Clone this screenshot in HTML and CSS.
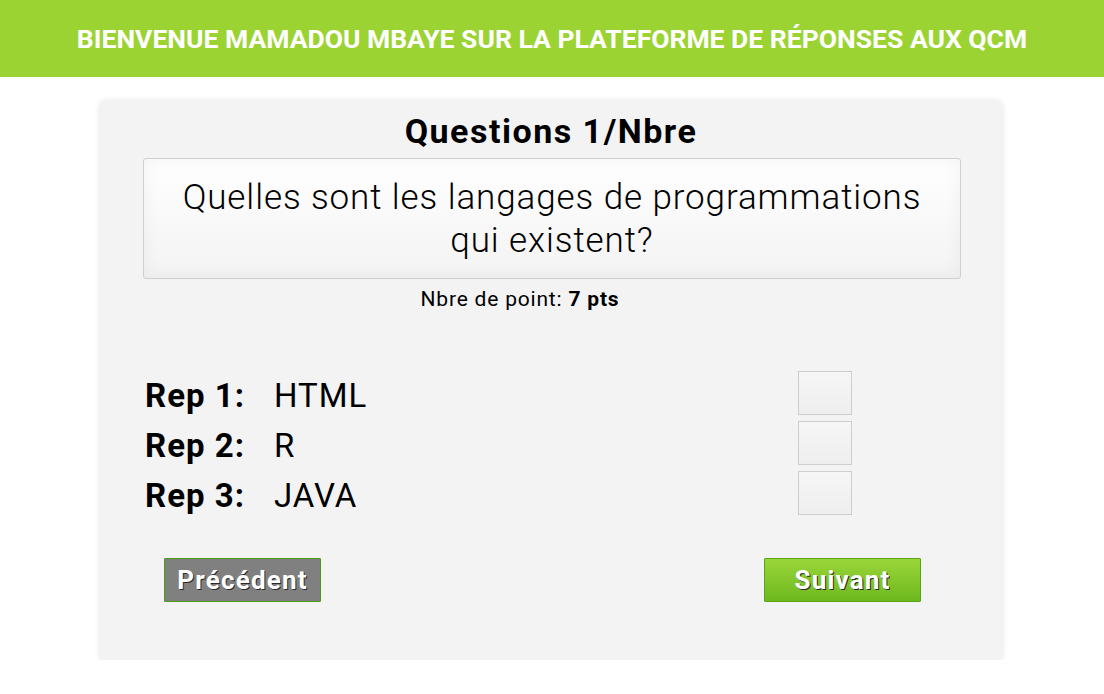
FILE: index.html
```html
<!DOCTYPE html>
<html lang="fr">
<head>
<meta charset="utf-8">
<title>QCM</title>
<link rel="stylesheet" href="styles.css">
</head>
<body>
<header class="topbar">
  <h2 class="welcome">Bienvenue Mamadou Mbaye sur la plateforme de réponses aux QCM</h2>
</header>
<main class="card">
  <h1 class="title">Questions 1/Nbre</h1>
  <div class="question-box">
    <p class="question">Quelles sont les langages de programmations qui existent?</p>
  </div>
  <p class="points">Nbre de point: <strong>7 pts</strong></p>
  <div class="answers">
    <div class="answer-row">
      <span class="rep-label">Rep 1:</span>
      <span class="rep-value">HTML</span>
      <span class="check"></span>
    </div>
    <div class="answer-row">
      <span class="rep-label">Rep 2:</span>
      <span class="rep-value">R</span>
      <span class="check"></span>
    </div>
    <div class="answer-row">
      <span class="rep-label">Rep 3:</span>
      <span class="rep-value">JAVA</span>
      <span class="check"></span>
    </div>
  </div>
  <div class="nav-buttons">
    <button class="btn btn-prev">Précédent</button>
    <button class="btn btn-next">Suivant</button>
  </div>
</main>
</body>
</html>
```

FILE: styles.css
```css
* { box-sizing: border-box; }

body {
  margin: 0;
  background: #ffffff;
  font-family: Roboto, "Liberation Sans", sans-serif;
  color: #000;
}

.topbar {
  height: 77px;
  background: #9bd432;
  display: flex;
  align-items: center;
  justify-content: center;
}

.welcome {
  margin: 0;
  color: #fff;
  font-size: 26.5px;
  font-weight: 700;
  text-transform: uppercase;
  letter-spacing: 0;
}

.card {
  width: 902px;
  height: 560px;
  margin: 23px 0 0 100px;
  background: #f3f3f3;
  border-radius: 6px;
  box-shadow: 0 1px 6px rgba(0, 0, 0, 0.12);
  padding-top: 9px;
}

.title {
  margin: 0;
  text-align: center;
  font-size: 34px;
  font-weight: 700;
  letter-spacing: 1.5px;
  line-height: 44px;
}

.question-box {
  margin: 5px 41px 0 43px;
  height: 121px;
  border: 1px solid #cfcfcf;
  border-radius: 3px;
  background: linear-gradient(#ffffff, #f3f3f3);
  box-shadow: inset 0 0 18px rgba(0, 0, 0, 0.05);
  display: flex;
  align-items: center;
  justify-content: center;
  padding: 0 36px;
}

.question {
  margin: 0;
  text-align: center;
  font-size: 35px;
  font-weight: 300;
  letter-spacing: 0.9px;
  line-height: 43px;
}

.points {
  margin: 7px 0 0;
  padding-right: 62px;
  text-align: center;
  font-size: 21px;
  letter-spacing: 0.8px;
  line-height: 26px;
}

.answers {
  margin-top: 58px;
  padding-left: 45px;
  display: flex;
  flex-direction: column;
  gap: 6px;
}

.answer-row {
  display: grid;
  grid-template-columns: 129px 524px 54px;
  align-items: center;
  height: 44px;
}

.rep-label {
  font-size: 33px;
  font-weight: 700;
  letter-spacing: 1px;
  padding-top: 6px;
}

.rep-value {
  font-size: 33px;
  font-weight: 400;
  letter-spacing: 1px;
  padding-top: 6px;
}

.check {
  width: 54px;
  height: 44px;
  border: 1px solid #cdcdcd;
  background: linear-gradient(#f6f6f6, #eeeeee);
}

.nav-buttons {
  margin: 44px 81px 0 64px;
  display: flex;
  justify-content: space-between;
}

.btn {
  width: 157px;
  height: 44px;
  font-family: inherit;
  font-size: 26px;
  font-weight: 700;
  letter-spacing: 1.2px;
  color: #fff;
  text-shadow: 1px 1px 0 #2a2a2a;
  border-radius: 1px;
  cursor: pointer;
  padding: 0;
}

.btn-prev {
  background: #808080;
  border: 1px solid #4a9b12;
}

.btn-next {
  background: linear-gradient(#9ad63a, #6db81e);
  border: 1px solid #58a516;
}
```
